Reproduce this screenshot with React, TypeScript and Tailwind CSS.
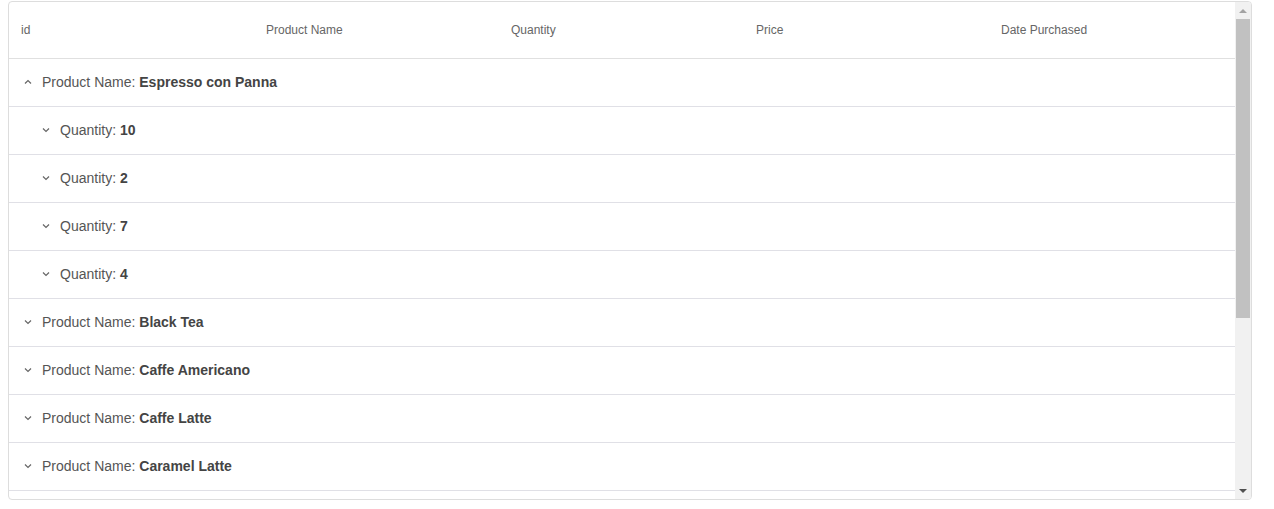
import React from "react";

const COLUMNS = ["id", "Product Name", "Quantity", "Price", "Date Purchased"];

type Row = { level: number; label: string; value: string; open: boolean };

const ROWS: Row[] = [
  { level: 0, label: "Product Name", value: "Espresso con Panna", open: true },
  { level: 1, label: "Quantity", value: "10", open: false },
  { level: 1, label: "Quantity", value: "2", open: false },
  { level: 1, label: "Quantity", value: "7", open: false },
  { level: 1, label: "Quantity", value: "4", open: false },
  { level: 0, label: "Product Name", value: "Black Tea", open: false },
  { level: 0, label: "Product Name", value: "Caffe Americano", open: false },
  { level: 0, label: "Product Name", value: "Caffe Latte", open: false },
  { level: 0, label: "Product Name", value: "Caramel Latte", open: false },
];

function Caret({ up }: { up: boolean }) {
  return (
    <svg width="8" height="6" viewBox="0 0 8 6" className="shrink-0">
      <path
        d={up ? "M1 4.5 L4 1.5 L7 4.5" : "M1 1.5 L4 4.5 L7 1.5"}
        fill="none"
        stroke="#666"
        strokeWidth="1.2"
      />
    </svg>
  );
}

export default function App() {
  return (
    <div className="bg-white h-[509px] pt-px pl-2 font-['Liberation_Sans',Arial,sans-serif]">
      <div className="flex h-[499px] w-[1244px] overflow-hidden rounded border border-[#dddddd] bg-white">
        <div className="flex-1 overflow-hidden">
          {/* header */}
          <div className="flex h-[57px] items-center border-b border-[#e0e0e0] text-xs text-[#666]">
            {COLUMNS.map((c) => (
              <div key={c} className="w-[245px] shrink-0 px-3">
                {c}
              </div>
            ))}
          </div>

          {ROWS.map((r, i) => (
            <div
              key={i}
              className={`flex h-[48px] shrink-0 items-center gap-[10px] border-b border-[#e0e0e6] pb-[2px] text-sm text-[#555] ${
                r.level === 0 ? "pl-[15px]" : "pl-[33px]"
              }`}
            >
              <Caret up={r.open} />
              <span>
                {r.label}: <b className="font-bold text-[#444]">{r.value}</b>
              </span>
            </div>
          ))}
          {/* next group row, cut off by the viewport */}
          <div className="h-[48px] border-b border-[#e0e0e6]" />
        </div>

        {/* scrollbar */}
        <div className="flex w-[16px] shrink-0 flex-col bg-[#f1f1f1]">
          <div className="flex h-[17px] items-center justify-center">
            <div className="h-0 w-0 border-x-[4px] border-b-[4px] border-x-transparent border-b-[#a3a3a3]" />
          </div>
          <div className="mx-[1px] h-[299px] bg-[#c1c1c1]" />
          <div className="flex-1" />
          <div className="flex h-[17px] items-center justify-center">
            <div className="h-0 w-0 border-x-[4px] border-t-[4px] border-x-transparent border-t-[#505050]" />
          </div>
        </div>
      </div>
    </div>
  );
}
